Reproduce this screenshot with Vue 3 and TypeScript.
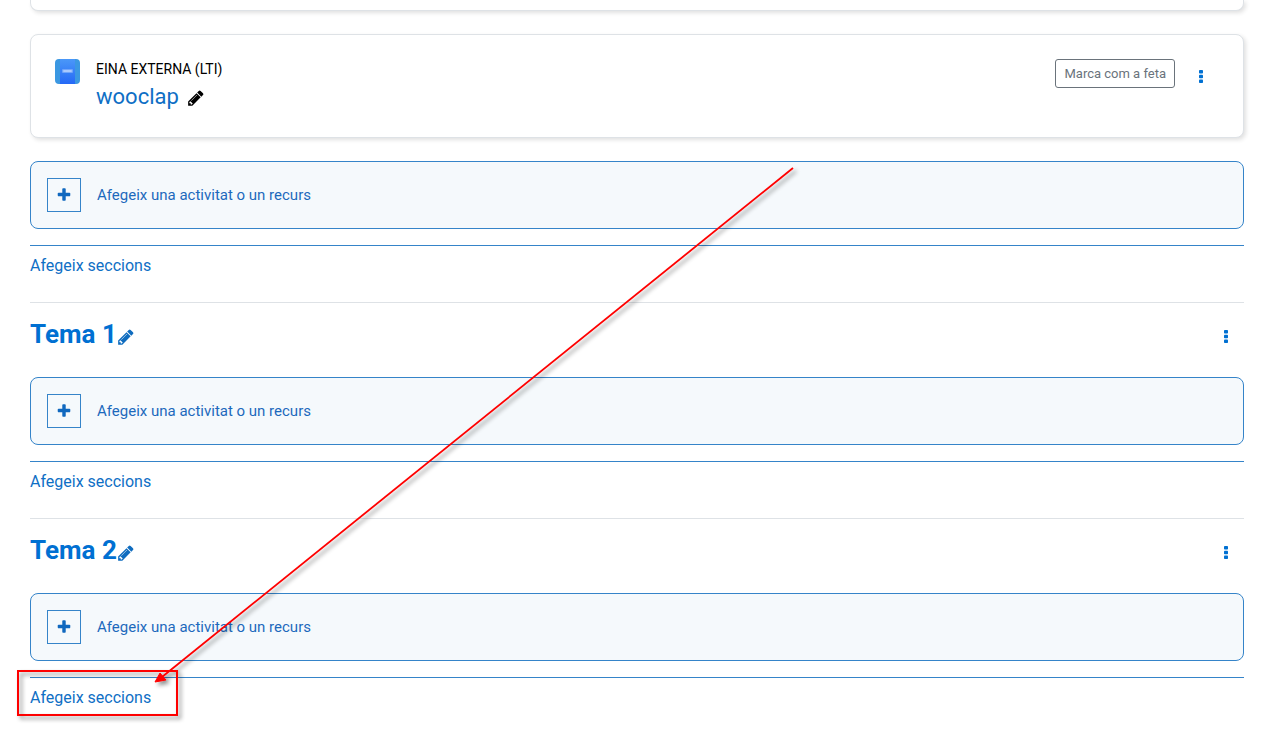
<script setup lang="ts">
interface Section {
  id: number
  title: string | null
}

const sections: Section[] = [
  { id: 0, title: null },
  { id: 1, title: 'Tema 1' },
  { id: 2, title: 'Tema 2' },
]

const pencilPath =
  'M491 1536l91-91-235-235-91 91v107h128v128h107zm523-928q0-22-22-22-10 0-17 7l-542 542q-7 7-7 17 0 22 22 22 10 0 17-7l542-542q7-7 7-17zm-54-192l416 416-832 832h-416v-416zm683 96q0 53-37 90l-166 166-416-416 166-165q36-38 90-38 53 0 91 38l235 234q37 39 37 91z'
const plusPath =
  'M1600 736v192q0 40-28 68t-68 28h-416v416q0 40-28 68t-68 28h-192q-40 0-68-28t-28-68v-416h-416q-40 0-68-28t-28-68v-192q0-40 28-68t68-28h416v-416q0-40 28-68t68-28h192q40 0 68 28t28 68v416h416q40 0 68 28t28 68z'
</script>

<template>
  <main class="course">
    <div class="card card-tail"></div>

    <section v-for="section in sections" :key="section.id" class="section">
      <header v-if="section.title" class="section-head">
        <h3 class="section-title"><a href="#">{{ section.title }}</a></h3>
        <button type="button" class="icon-button edit" :aria-label="`Edita ${section.title}`">
          <svg class="pencil" viewBox="128 0 1664 1792" aria-hidden="true"><path :d="pencilPath" /></svg>
        </button>
        <button type="button" class="icon-button menu" aria-label="Menú de la secció">
          <svg class="dots" viewBox="0 0 4 13" aria-hidden="true">
            <rect width="4" height="3.5" rx="0.8" /><rect y="4.75" width="4" height="3.5" rx="0.8" /><rect y="9.5" width="4" height="3.5" rx="0.8" />
          </svg>
        </button>
      </header>

      <article v-else class="card activity">
        <svg class="tool-icon" viewBox="0 0 25 25" aria-hidden="true">
          <defs>
            <linearGradient id="tool-fill" x1="0" y1="0" x2="0" y2="1">
              <stop offset="0" stop-color="#4b98f8" />
              <stop offset="1" stop-color="#2468f6" />
            </linearGradient>
          </defs>
          <rect width="25" height="25" rx="4" fill="#3b98e2" />
          <rect x="5" width="15" height="25" fill="url(#tool-fill)" />
          <rect x="7" y="10" width="11" height="4" rx="1" fill="#6fa4fa" />
          <rect x="8" y="11" width="9" height="2" rx="1" fill="#a9c9fd" />
        </svg>
        <div class="activity-text">
          <span class="activity-type">EINA EXTERNA (LTI)</span>
          <div class="activity-name">
            <a href="#">wooclap</a>
            <button type="button" class="icon-button dark" aria-label="Edita wooclap">
              <svg class="pencil" viewBox="128 0 1664 1792" aria-hidden="true"><path :d="pencilPath" /></svg>
            </button>
          </div>
        </div>
        <button type="button" class="done">Marca com a feta</button>
        <button type="button" class="icon-button menu" aria-label="Menú de l'activitat">
          <svg class="dots" viewBox="0 0 4 13" aria-hidden="true">
            <rect width="4" height="3.5" rx="0.8" /><rect y="4.75" width="4" height="3.5" rx="0.8" /><rect y="9.5" width="4" height="3.5" rx="0.8" />
          </svg>
        </button>
      </article>

      <button type="button" class="add-activity">
        <span class="plus">
          <svg viewBox="0 0 1792 1792" aria-hidden="true"><path :d="plusPath" /></svg>
        </span>
        <span>Afegeix una activitat o un recurs</span>
      </button>

      <div class="add-section"><a href="#">Afegeix seccions</a></div>
    </section>

    <svg class="annotation" aria-hidden="true">
      <defs>
        <filter id="mark-shadow" filterUnits="userSpaceOnUse" x="0" y="140" width="830" height="600">
          <feDropShadow dx="3" dy="3" stdDeviation="2" flood-color="#000" flood-opacity="0.45" />
        </filter>
      </defs>
      <g filter="url(#mark-shadow)">
        <rect x="18" y="671" width="159" height="44" fill="none" stroke="#fe0000" stroke-width="2" />
        <path d="M793 168L162 677" stroke="#fe0000" stroke-width="1.8" />
        <path d="M155 682L160 673L166 680Z" fill="#fe0000" stroke="#fe0000" />
      </g>
    </svg>
  </main>
</template>

<style>
body {
  margin: 0;
  background: #fff;
}
</style>

<style scoped>
.course {
  position: relative;
  box-sizing: border-box;
  min-height: 100vh;
  padding: 0 39px 16px 30px;
  overflow: hidden;
  font-family: Roboto, "Open Sans", sans-serif;
  font-size: 16px;
  line-height: 24px;
  color: #000;
}
a {
  color: #0f6fc5;
  text-decoration: none;
}
button {
  font: inherit;
  cursor: pointer;
}
.card {
  box-sizing: border-box;
  border: 1px solid #dee2e6;
  border-radius: 8px;
  background: #fff;
  box-shadow: 2px 2px 4px rgba(0, 0, 0, 0.12);
}
.card-tail {
  height: 11px;
  border-top: 0;
  border-radius: 0 0 8px 8px;
  margin-bottom: 23px;
}
.activity {
  display: flex;
  align-items: flex-start;
  min-height: 104px;
  padding: 24px;
  margin-bottom: 23px;
}
.tool-icon {
  flex: none;
  width: 25px;
  height: 25px;
  margin-right: 16px;
}
.activity-text {
  flex: 1;
}
.activity-type {
  display: block;
  font-size: 14px;
  line-height: 21px;
}
.activity-name {
  display: flex;
  align-items: center;
  gap: 9px;
  font-size: 22px;
  line-height: 33px;
}
.icon-button {
  display: flex;
  padding: 0;
  border: 0;
  background: none;
  color: #0f6cbf;
}
.icon-button.dark {
  color: #000;
  padding-top: 3px;
}
.pencil {
  width: 17px;
  height: 18px;
  fill: currentColor;
}
.dots {
  width: 4px;
  height: 13px;
  fill: #0070d2;
}
.done {
  height: 29px;
  padding: 0 8px;
  border: 1px solid #6a737b;
  border-radius: 3px;
  background: #fff;
  color: #6a737b;
  font-size: 13px;
  line-height: 20px;
}
.activity .menu {
  padding: 11px 16px 0 24px;
}
.add-activity {
  display: flex;
  align-items: center;
  gap: 16px;
  box-sizing: border-box;
  width: 100%;
  height: 68px;
  padding: 0 16px;
  border: 1px solid #3584c9;
  border-radius: 8px;
  background: #f5f9fc;
  color: #1d69bc;
  font-size: 15px;
  text-align: left;
}
.plus {
  display: flex;
  align-items: center;
  justify-content: center;
  box-sizing: border-box;
  width: 34px;
  height: 34px;
  border: 1px solid #3584c9;
}
.plus svg {
  width: 16px;
  height: 16px;
  fill: #1068bf;
}
.add-section {
  margin-top: 16px;
  padding-top: 8px;
  border-top: 1px solid #3584c9;
}
.section-head {
  display: flex;
  align-items: center;
  height: 62px;
  margin-top: 24px;
  margin-bottom: 12px;
  border-top: 1px solid #dee2e6;
}
.section-title {
  margin: 0;
  font-size: 26px;
  line-height: 32px;
  font-weight: 700;
}
.section-title a {
  color: #0070d2;
}
.section-head .edit {
  padding: 6px 0 0 1px;
}
.section-head .menu {
  margin-left: auto;
  padding: 5px 16px 0;
}
.annotation {
  position: absolute;
  inset: 0;
  width: 100%;
  height: 100%;
  pointer-events: none;
}
</style>
